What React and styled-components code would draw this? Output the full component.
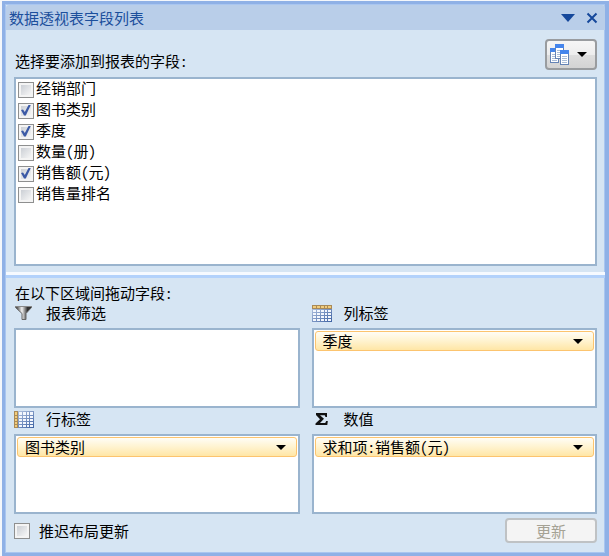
import React, { useId, useState } from "react";
import styled, { createGlobalStyle } from "styled-components";

const COLORS = {
  FRAME: "#8fb1e6",
  FRAME_INNER: "#a9c6f0",
  PANEL: "#d6e5f3",
  TITLE_BAR: "#b9cee9",
  TITLE: "#1c4f9c",
  BOX_BORDER: "#9ab4ce",
  CHIP_BORDER: "#fcc46f",
};

const FIELDS = [
  { name: "经销部门", checked: false },
  { name: "图书类别", checked: true },
  { name: "季度", checked: true },
  { name: "数量(册)", checked: false },
  { name: "销售额(元)", checked: true },
  { name: "销售量排名", checked: false },
];

const GlobalStyle = createGlobalStyle`
  * {
    box-sizing: border-box;
  }

  body {
    margin: 0;
    background: #f4f7fb;
  }

  body, button, input {
    font-family: "Noto Sans CJK SC", "Liberation Sans", sans-serif;
    font-size: 15px;
    line-height: 18px;
    font-feature-settings: "hwid";
  }
`;

const DownArrow = ({ width = 10, height = 5 }) => (
  <svg width={width} height={height} viewBox="0 0 10 5" preserveAspectRatio="none" aria-hidden="true">
    <path d="M0 0h10L5 5z" fill="currentColor" />
  </svg>
);

const CloseIcon = () => (
  <svg width="12" height="12" viewBox="0 0 12 12" aria-hidden="true">
    <path d="M1.5 1.5l9 9M10.5 1.5l-9 9" stroke="currentColor" strokeWidth="2" />
  </svg>
);

const Sheet = ({ x, y }) => (
  <g transform={`translate(${x} ${y})`}>
    <rect x="0.5" y="0.5" width="8" height="14" fill="#fff" stroke="#6483b5" />
    <rect x="0" y="0" width="9" height="4" fill="#4585ec" />
    <path d="M2 6.5h5M2 8.5h5M2 10.5h5M2 12.5h5" stroke="#a9bcd8" />
  </g>
);

const LayoutIcon = () => (
  <svg width="19" height="21" viewBox="0 0 19 21" aria-hidden="true">
    <Sheet x={0} y={4} />
    <Sheet x={5} y={0} />
    <Sheet x={10} y={6} />
  </svg>
);

const FilterIcon = () => {
  const id = useId();

  return (
    <svg width="20" height="16" viewBox="0 0 20 16" aria-hidden="true">
      <linearGradient id={id}>
        <stop offset="0.1" stopColor="#555" />
        <stop offset="0.4" stopColor="#f2f2f2" />
        <stop offset="0.75" stopColor="#333" />
      </linearGradient>
      <path d="M1.5 1.5h16v1L12 8.5v6H8v-6l-6.5-6z" fill={`url(#${id})`} stroke="#666" />
      <path d="M1 1.5h17" stroke="#888" />
    </svg>
  );
};

const TableIcon = ({ side }) => {
  const id = useId();

  return (
    <svg width="20" height="17" viewBox="0 0 20 17" aria-hidden="true">
      <linearGradient id={id} x2="1" y2="1">
        <stop offset="0" stopColor="#bccbe4" />
        <stop offset="1" stopColor="#3d62a3" />
      </linearGradient>
      <rect width="20" height="17" fill={`url(#${id})`} />
      <path
        d="M1 5h3v2H1zM5 5h3v2H5zM9 5h3v2H9zM13 5h2v2h-2zM16 5h3v2h-3zM1 8h3v2H1zM5 8h3v2H5zM9 8h3v2H9zM13 8h2v2h-2zM16 8h3v2h-3zM1 11h3v2H1zM5 11h3v2H5zM9 11h3v2H9zM13 11h2v2h-2zM16 11h3v2h-3zM1 14h3v2H1zM5 14h3v2H5zM9 14h3v2H9zM13 14h2v2h-2zM16 14h3v2h-3zM5 1h3v3H5zM9 1h3v3H9zM13 1h2v3h-2zM16 1h3v3h-3z"
        fill="#f3f7fd"
      />
      {side === "top" ? (
        <>
          <path d="M0 0h20v4H0z" fill="#a98a58" />
          <path d="M1 1h3v2H1zM5 1h3v2H5zM9 1h3v2H9zM13 1h2v2h-2zM16 1h3v2h-3z" fill="#f2cd7c" />
        </>
      ) : (
        <>
          <path d="M0 0h4v17H0z" fill="#a98a58" />
          <path d="M1 1h2v3H1zM1 5h2v2H1zM1 8h2v2H1zM1 11h2v2H1zM1 14h2v2H1z" fill="#f2cd7c" />
        </>
      )}
    </svg>
  );
};

const SumIcon = () => (
  <svg width="20" height="16" viewBox="0 0 20 16" aria-hidden="true">
    <path
      d="M4 2h11v4h-1.5l-.8-1.8H8l4 3.6L8 12h5.2l1-2h1.6l-.5 4H3.5v-1.6L8 8.2 4 4z"
      fill="#111"
    />
  </svg>
);

const Area = ({ icon, title, field }) => (
  <AreaSection>
    <AreaTitle>
      {icon}
      {title}
    </AreaTitle>
    <DropBox>
      {field && (
        <FieldButton type="button" aria-haspopup="menu">
          {field}
          <DownArrow />
        </FieldButton>
      )}
    </DropBox>
  </AreaSection>
);

const App = () => {
  const [fields, setFields] = useState(FIELDS);
  const [deferred, setDeferred] = useState(false);

  const handleToggle = (name) => {
    setFields(
      fields.map((field) =>
        field.name === name ? { ...field, checked: !field.checked } : field,
      ),
    );
  };

  return (
    <>
      <GlobalStyle />
      <Panel>
        <TitleBar>
          <Title>数据透视表字段列表</Title>
          <TitleButton type="button" aria-label="选项">
            <DownArrow width={14} height={8} />
          </TitleButton>
          <TitleButton type="button" aria-label="关闭">
            <CloseIcon />
          </TitleButton>
        </TitleBar>
        <FieldSection>
          <FieldHeader>
            <Caption>选择要添加到报表的字段:</Caption>
            <LayoutButton type="button" aria-label="布局" aria-haspopup="menu">
              <LayoutIcon />
              <DownArrow />
            </LayoutButton>
          </FieldHeader>
          <FieldList>
            {fields.map(({ name, checked }) => (
              <FieldLabel key={name}>
                <Checkbox checked={checked} onChange={() => handleToggle(name)} />
                <FieldName>{name}</FieldName>
              </FieldLabel>
            ))}
          </FieldList>
        </FieldSection>
        <Divider />
        <AreaWrapper>
          <Caption>在以下区域间拖动字段:</Caption>
          <AreaGrid>
            <Area icon={<FilterIcon />} title="报表筛选" />
            <Area icon={<TableIcon side="top" />} title="列标签" field="季度" />
            <Area icon={<TableIcon side="left" />} title="行标签" field="图书类别" />
            <Area icon={<SumIcon />} title="数值" field="求和项:销售额(元)" />
          </AreaGrid>
        </AreaWrapper>
        <Footer>
          <DeferLabel>
            <Checkbox checked={deferred} onChange={() => setDeferred(!deferred)} />
            推迟布局更新
          </DeferLabel>
          <UpdateButton type="button" disabled={!deferred}>
            更新
          </UpdateButton>
        </Footer>
      </Panel>
    </>
  );
};

const Panel = styled.main`
  display: flex;
  flex-direction: column;
  min-height: calc(100vh - 1px);
  margin: 1px 0 0 2px;
  padding: 1px 0 1px 1px;
  border: solid ${COLORS.FRAME};
  border-width: 3px 4px 3px 3px;
  background: ${COLORS.PANEL};
  box-shadow: inset 0 0 0 1px ${COLORS.FRAME_INNER};
  color: #000;
`;

const TitleBar = styled.header`
  display: flex;
  align-items: center;
  gap: 4px;
  height: 25px;
  padding: 0 3px;
  border-radius: 3px 3px 0 0;
  background: ${COLORS.TITLE_BAR};
  color: ${COLORS.TITLE};
`;

const Title = styled.h1`
  flex: 1;
  margin: 0;
  font-size: 15px;
  font-weight: 400;
`;

const TitleButton = styled.button`
  display: flex;
  align-items: center;
  justify-content: center;
  width: 20px;
  height: 20px;
  padding: 0;
  border: none;
  background: transparent;
  color: #15489b;
`;

const FieldSection = styled.section`
  padding: 8px 8px 6px;
`;

const FieldHeader = styled.div`
  display: flex;
  align-items: flex-end;
  justify-content: space-between;
  height: 39px;
  padding-bottom: 7px;
`;

const Caption = styled.h2`
  margin: 0;
  padding-left: 1px;
  font-size: 15px;
  font-weight: 400;
`;

const LayoutButton = styled.button`
  display: flex;
  align-items: center;
  justify-content: space-between;
  width: 52px;
  height: 31px;
  padding: 0 8px 0 3px;
  border: 2px solid #999c9f;
  border-radius: 4px;
  background: linear-gradient(#f6f6f6, #ededed 50%, #dedede 51%, #d3d3d3);
  color: #000;
`;

const FieldList = styled.div`
  height: 189px;
  padding: 0 2px;
  border: 2px solid ${COLORS.BOX_BORDER};
  background: #fff;
`;

const FieldLabel = styled.label`
  display: flex;
  align-items: center;
  gap: 2px;
  height: 21px;
`;

const FieldName = styled.span`
  align-self: flex-start;
`;

const Checkbox = styled.input.attrs({ type: "checkbox" })`
  appearance: none;
  width: 16px;
  height: 16px;
  margin: 0;
  border: 1px solid #8e8f8f;
  background: linear-gradient(135deg, #cbcfd5, #f6f6f6) center / 10px 10px no-repeat #f4f4f4;

  &:checked::before {
    content: "";
    display: block;
    width: 10px;
    height: 11px;
    margin: 1px 2px;
    background: #3c5aa6;
    clip-path: polygon(0 50%, 20% 45%, 38% 68%, 78% 0, 100% 0, 48% 100%, 30% 100%);
  }
`;

const Divider = styled.hr`
  width: 100%;
  height: 6px;
  margin: 0;
  border: none;
  background: linear-gradient(#f6faff 50%, #b3d2fb 50%);
`;

const AreaWrapper = styled.section`
  padding: 6px 8px 0;
`;

const AreaGrid = styled.div`
  display: grid;
  grid-template-columns: 1fr 1fr;
  column-gap: 12px;
`;

const AreaSection = styled.section`
  display: flex;
  flex-direction: column;
`;

const AreaTitle = styled.h3`
  display: flex;
  align-items: center;
  gap: 12px;
  height: 26px;
  margin: 0;
  padding-bottom: 4px;
  font-size: 15px;
  font-weight: 400;
`;

const DropBox = styled.div`
  height: 80px;
  padding: 1px;
  border: 2px solid ${COLORS.BOX_BORDER};
  background: #fff;
`;

const FieldButton = styled.button`
  display: flex;
  align-items: center;
  justify-content: space-between;
  width: 100%;
  height: 20px;
  padding: 0 10px 0 7px;
  border: 1px solid ${COLORS.CHIP_BORDER};
  border-radius: 3px;
  background: linear-gradient(#fffdf6, #fff3cf 50%, #ffe6a6);
  color: #000;
  text-align: left;
`;

const Footer = styled.footer`
  display: flex;
  align-items: center;
  justify-content: space-between;
  padding: 4px 8px 8px;
`;

const DeferLabel = styled.label`
  display: flex;
  align-items: center;
  gap: 9px;
`;

const UpdateButton = styled.button`
  width: 92px;
  height: 25px;
  padding: 0;
  border: 2px solid #bfc2c4;
  border-radius: 4px;
  background: #f4f4f4;
  color: #000;

  &:disabled {
    color: #a5a294;
  }
`;

export default App;
